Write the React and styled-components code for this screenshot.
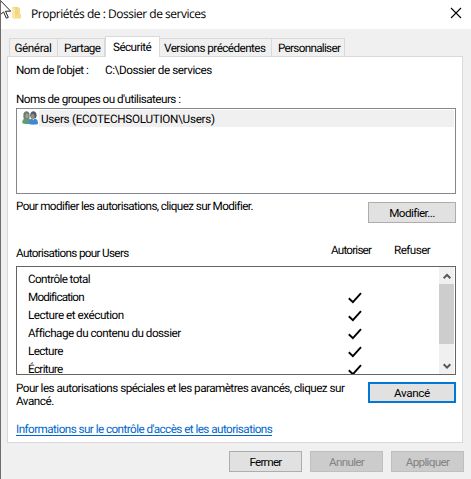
import React from 'react';
import styled, { createGlobalStyle } from 'styled-components';

const GlobalStyle = createGlobalStyle`
  * { box-sizing: border-box; }
  body { margin: 0; background: #f0f0f0; }
`;

const Dialog = styled.main`
  position: relative;
  width: 471px;
  height: 479px;
  overflow: hidden;
  display: flex;
  flex-direction: column;
  background: #f0f0f0;
  border-left: 1px solid #6f6b6f;
  color: #000;
  font: 11.7px/13px Roboto, "Liberation Sans", sans-serif;
  text-rendering: geometricPrecision;
`;

const Text = styled.span`
  display: block;
  white-space: pre;
  letter-spacing: ${p => (p.$ls ?? -0.4) - 0.1}px;
`;

const TitleBar = styled.header`
  height: 29px;
  flex: none;
  display: flex;
  align-items: flex-start;
  background: #fff;
  padding: 6px 8px 0 10px;
`;

const Title = styled.h1`
  margin: 0 auto 0 9px;
  font: 400 12px/16px "Open Sans", "Noto Sans", sans-serif;
  letter-spacing: -0.48px;
  white-space: nowrap;
`;

const CloseButton = styled.button`
  border: 0;
  background: none;
  padding: 0;
  width: 12px;
  height: 12px;
  margin: 1px 1px 0 0;
  svg { display: block; }
`;

const CursorArrow = styled.svg`
  position: absolute;
  left: -1px;
  top: 0;
`;

const TabStrip = styled.nav`
  flex: none;
  height: 27px;
  display: flex;
  align-items: flex-end;
  padding-left: 8px;
`;

const Tab = styled.div`
  width: ${p => p.$w}px;
  height: ${p => (p.$active ? 21 : 18)}px;
  margin-bottom: ${p => (p.$active ? -1 : 0)}px;
  padding: ${p => (p.$active ? 4 : 3)}px 0 0 ${p => p.$pad}px;
  border: 1px solid #d9d9d9;
  border-bottom: 0;
  border-left-width: ${p => (p.$joined ? 0 : 1)}px;
  background: ${p => (p.$active ? '#fff' : '#f0f0f0')};
  z-index: ${p => (p.$active ? 1 : 0)};
`;

const Pane = styled.section`
  flex: none;
  width: 456px;
  height: 387px;
  margin-left: 6px;
  padding: 7px 6px 0 8px;
  border: 1px solid #d9d9d9;
  background: #fff;
  display: flex;
  flex-direction: column;
`;

const ObjectRow = styled.div`
  display: grid;
  grid-template-columns: 89px 1fr;
  margin-bottom: 16px;
`;

const GroupList = styled.div`
  height: 86px;
  margin-top: 2px;
  padding: 1px;
  border: 1px solid #828790;
`;

const GroupItem = styled.div`
  height: 17px;
  display: flex;
  padding-left: 4px;
`;

const GroupName = styled.div`
  flex: 1;
  padding: 3px 0 0 2px;
  background: #f0f0f0;
`;

const ActionRow = styled.div`
  display: flex;
  justify-content: space-between;
  align-items: flex-start;
  padding-top: ${p => p.$top}px;
`;

const Copy = styled.div`
  margin-top: ${p => p.$shift}px;
`;

const Button = styled.button`
  width: ${p => p.$w}px;
  height: 21px;
  padding: 1px 0 0;
  display: flex;
  align-items: center;
  justify-content: center;
  font: inherit;
  color: #000;
  background: #e1e1e1;
  border: ${p => (p.$focus ? '2px solid #0078d7' : '1px solid #adadad')};
  &:disabled {
    color: #838383;
    background: #ccc;
    border-color: #bfbfbf;
  }
`;

const PermissionHeader = styled.div`
  display: grid;
  grid-template-columns: 315px 63px 1fr;
  height: 22px;
  margin-top: 21px;
`;

const HeaderLabel = styled.div`
  padding-top: ${p => (p.$low ? 3 : 0)}px;
`;

const PermissionBox = styled.div`
  flex: none;
  height: 109px;
  display: flex;
  border: 1px solid #646464;
  overflow: hidden;
`;

const PermissionList = styled.div`
  flex: 1;
  padding: 3px 0 0 11px;
`;

const PermissionRow = styled.div`
  height: 18px;
  display: grid;
  grid-template-columns: 320px 1fr;
  padding-top: 3px;
`;

const ScrollBar = styled.div`
  width: 15px;
  margin-right: 1px;
  background: #f0f0f0;
  display: flex;
  flex-direction: column;
  align-items: center;
  justify-content: space-between;
`;

const ScrollThumb = styled.div`
  width: 15px;
  height: 60px;
  margin-bottom: auto;
  background: #cdcdcd;
`;

const ArrowBox = styled.div`
  height: 17px;
  padding-top: ${p => p.$top}px;
  svg { display: block; }
`;

const HelpLink = styled.a`
  align-self: flex-start;
  margin-top: 15px;
  height: 13px;
  color: #0066cc;
  border-bottom: 1px solid #0066cc;
`;

const Footer = styled.footer`
  display: flex;
  justify-content: flex-end;
  gap: 8px;
  padding: 8px 7px 0 0;
`;

const FolderIcon = () => (
  <svg width="11" height="14" viewBox="0 0 11 14">
    <path d="M1 1h6l1 1v10H1z" fill="#f2d57e" />
    <path d="M1 1l3 1v11l-3-1z" fill="#fbe7a8" />
    <path d="M7 2h2v6h1v4.500H4V9h3z" fill="#f8dc8c" />
  </svg>
);

const UsersIcon = () => (
  <svg width="17" height="17" viewBox="0 0 17 17">
    <path d="M.3 13c0-3.500 1.500-4.700 4.500-4.700s4 1 4 5c-2 1-6.500 1-8.500-.3z" fill="#5b9c78" />
    <path d="M1.400 4.800c-.2-4.800 6.400-4.800 6.200 0v3c-1 2-5.200 2-6.200 0z" fill="#6c7d72" />
    <ellipse cx="5" cy="6" rx="1.700" ry="2.600" fill="#a99a86" />
    <path d="M6.800 13.800c0-4 1.500-5.300 4.600-5.300s4.600 1.300 4.600 5.300c-2 1.200-7.200 1.200-9.200 0z" fill="#4289cc" />
    <path d="M8.200 5.500c-.2-5.600 6.600-5.600 6.400 0l-.6 2.500H8.800z" fill="#4e5d6c" />
    <ellipse cx="10.800" cy="6.400" rx="1.800" ry="2.700" fill="#9b8c80" />
    <path d="M10.300 9l1 1.300L12.500 9z" fill="#b9d5ee" />
  </svg>
);

const CheckMark = () => (
  <svg width="14" height="13" viewBox="0 0 14 13">
    <path d="M.8 7.200l4.100 4L13 2.200" fill="none" stroke="#000" strokeWidth="1.900" />
  </svg>
);

const Chevron = ({ down }) => (
  <svg width="8" height="7" viewBox="0 0 8 7">
    <path d={down ? 'M.7 1.300L4 4.600l3.300-3.300' : 'M.7 5.200L4 1.900l3.300 3.300'} fill="none" stroke="#555" strokeWidth="2" />
  </svg>
);

const tabs = [
  { label: 'Général', w: 49, pad: 4.5, ls: -0.32 },
  { label: 'Partage', w: 47, pad: 6, ls: -0.55, joined: true },
  { label: 'Sécurité', w: 55, pad: 7, ls: -0.45, active: true },
  { label: 'Versions précédentes', w: 112, pad: 4, ls: -0.45, joined: true },
  { label: 'Personnaliser', w: 73, pad: 6, ls: -0.6, joined: true },
];

const permissions = [
  { label: 'Contrôle total', ls: -0.5 },
  { label: 'Modification', ls: -0.7, allowed: true },
  { label: 'Lecture et exécution', ls: -0.37, allowed: true },
  { label: 'Affichage du contenu du dossier', ls: -0.41, allowed: true },
  { label: 'Lecture', ls: -0.5, allowed: true },
  { label: 'Écriture', ls: -0.55, allowed: true },
];

export default function App() {
  return (
    <>
      <GlobalStyle />
      <Dialog>
        <TitleBar>
          <FolderIcon />
          <Title>Propriétés de : Dossier de services</Title>
          <CloseButton aria-label="Fermer la fenêtre">
            <svg width="12" height="12" viewBox="0 0 12 12">
              <path d="M1 1l10 10M11 1L1 11" stroke="#000" strokeWidth="1.100" />
            </svg>
          </CloseButton>
        </TitleBar>
        <TabStrip>
          {tabs.map(t => (
            <Tab key={t.label} $w={t.w} $pad={t.pad} $active={t.active} $joined={t.joined}>
              <Text $ls={t.ls}>{t.label}</Text>
            </Tab>
          ))}
        </TabStrip>
        <Pane>
          <ObjectRow>
            <Text $ls={-0.38}>Nom de l'objet :</Text>
            <Text $ls={-0.33}>C:\Dossier de services</Text>
          </ObjectRow>
          <Text $ls={-0.43}>Noms de groupes ou d'utilisateurs :</Text>
          <GroupList>
            <GroupItem>
              <UsersIcon />
              <GroupName>
                <Text $ls={-0.19}>Users (ECOTECHSOLUTION\Users)</Text>
              </GroupName>
            </GroupItem>
          </GroupList>
          <ActionRow $top={6}>
            <Text $ls={-0.51}>Pour modifier les autorisations, cliquez sur Modifier.</Text>
            <Copy $shift={2}>
              <Button $w={88}><Text $ls={-0.47}>Modifier...</Text></Button>
            </Copy>
          </ActionRow>
          <PermissionHeader>
            <HeaderLabel $low><Text $ls={-0.57}>Autorisations pour Users</Text></HeaderLabel>
            <HeaderLabel><Text $ls={-0.7}>Autoriser</Text></HeaderLabel>
            <HeaderLabel><Text $ls={-0.45}>Refuser</Text></HeaderLabel>
          </PermissionHeader>
          <PermissionBox>
            <PermissionList>
              {permissions.map(p => (
                <PermissionRow key={p.label}>
                  <Text $ls={p.ls}>{p.label}</Text>
                  {p.allowed && <CheckMark />}
                </PermissionRow>
              ))}
            </PermissionList>
            <ScrollBar>
              <ArrowBox $top={6}><Chevron /></ArrowBox>
              <ScrollThumb />
              <ArrowBox $top={6}><Chevron down /></ArrowBox>
            </ScrollBar>
          </PermissionBox>
          <ActionRow $top={7}>
            <div>
              <Text $ls={-0.43}>Pour les autorisations spéciales et les paramètres avancés, cliquez sur</Text>
              <Text $ls={-0.38}>Avancé.</Text>
            </div>
            <Button $w={88} $focus><Text $ls={-0.25}>Avancé</Text></Button>
          </ActionRow>
          <HelpLink>
            <Text $ls={-0.45}>Informations sur le contrôle d'accès et les autorisations</Text>
          </HelpLink>
        </Pane>
        <Footer>
          <Button $w={73}><Text $ls={-0.75}>Fermer</Text></Button>
          <Button $w={73} disabled><Text $ls={-0.6}>Annuler</Text></Button>
          <Button $w={73} disabled><Text $ls={-0.6}>Appliquer</Text></Button>
        </Footer>
        <CursorArrow width="14" height="20" viewBox="0 0 14 20">
          <path d="M-4-4L10.700 11.200H5.500l2.800 6.200-2 .8-2.700-6.300L0 15z" fill="#fff" stroke="#222" strokeWidth="1" />
        </CursorArrow>
      </Dialog>
    </>
  );
}
